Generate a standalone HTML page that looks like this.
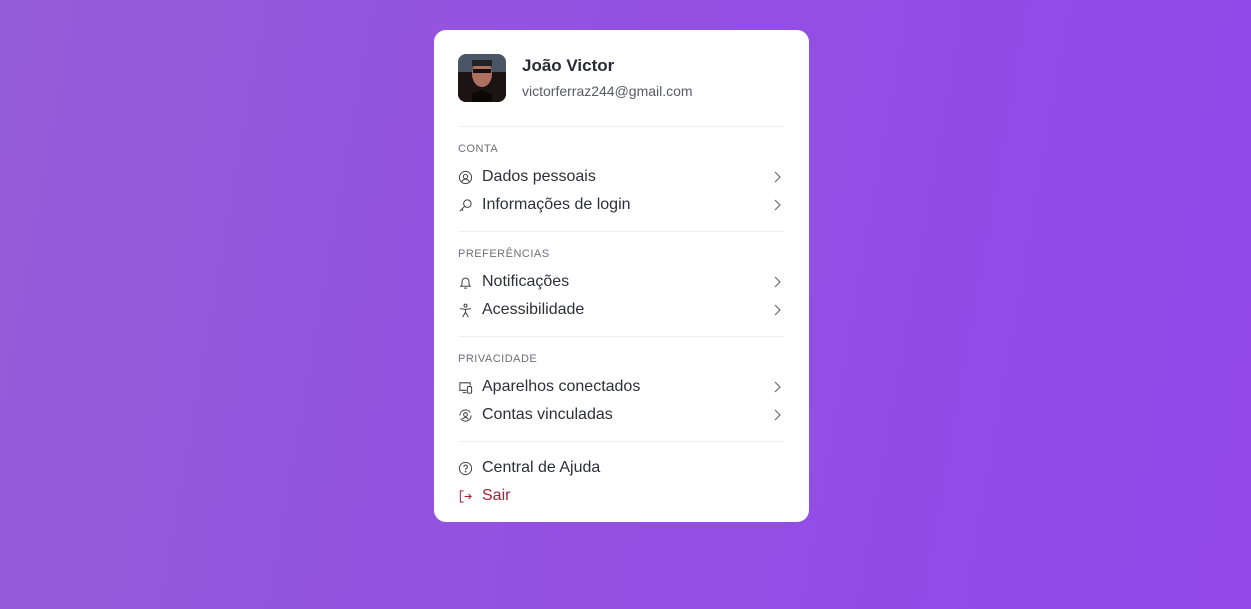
<!DOCTYPE html>
<html><head><meta charset="utf-8"><style>
*{margin:0;padding:0;box-sizing:border-box}
body{width:1251px;height:609px;overflow:hidden;background:linear-gradient(100deg,#955cd8 0%,#9350e2 50%,#9248eb 100%);font-family:"Liberation Sans",sans-serif;position:relative}
.card{position:absolute;left:434px;top:30px;width:375px;height:492px;background:#fff;border-radius:12px}
.av{position:absolute;left:24px;top:24px;width:48px;height:48px;border-radius:8px;overflow:hidden}
.name{position:absolute;left:88px;top:26px;font-size:17px;font-weight:bold;color:#2b2b35}
.mail{position:absolute;left:88px;top:53px;font-size:14px;color:#5a5a66}
.hr{position:absolute;left:24px;width:326px;height:1px;background:#f0f0f4}
.lab{position:absolute;left:24px;font-size:11px;color:#6e6e78;letter-spacing:.5px}
.row{position:absolute;left:24px;width:326px;height:24px;font-size:16px;color:#2f2f3a;display:flex;align-items:center}
.row svg.i{width:15px;height:15px;margin-right:9px;flex:none}
.row .ch{position:absolute;right:2px;top:6px;width:9px;height:12px}
</style></head><body>
<div class="card">
<div class="av"><svg width="48" height="48"><rect width="48" height="48" fill="#4a5566"/><rect y="18" width="48" height="30" fill="#1c1414"/><ellipse cx="24" cy="20" rx="10" ry="13" fill="#b07060"/><rect x="14" y="6" width="20" height="6" fill="#222"/><rect x="15" y="15" width="18" height="4" fill="#111"/><path d="M14 40 L24 36 L34 40 L34 48 L14 48Z" fill="#0c0808"/></svg></div>
<div class="name">João Victor</div>
<div class="mail">victorferraz244@gmail.com</div>
<div class="hr" style="top:96px"></div>
<div class="lab" style="top:113px">CONTA</div>
<div class="row" style="top:135px"><svg class="i" viewBox="0 0 16 16" fill="none" stroke="#444" stroke-width="1.1"><circle cx="8" cy="8" r="6.5"/><circle cx="8" cy="7" r="2.3"/><path d="M4 12.5c1-2 2.5-2.6 4-2.6s3 .6 4 2.6"/></svg>Dados pessoais<svg class="ch" viewBox="0 0 9 12" fill="none" stroke="#666" stroke-width="1.1"><path d="M2 1l5 5-5 5"/></svg></div>
<div class="row" style="top:163px"><svg class="i" viewBox="0 0 16 16" fill="none" stroke="#444" stroke-width="1.1"><circle cx="10" cy="6" r="4"/><path d="M7 9l-5 5M4 12l1.5 1.5"/></svg>Informações de login<svg class="ch" viewBox="0 0 9 12" fill="none" stroke="#666" stroke-width="1.1"><path d="M2 1l5 5-5 5"/></svg></div>
<div class="hr" style="top:201px"></div>
<div class="lab" style="top:218px">PREFERÊNCIAS</div>
<div class="row" style="top:240px"><svg class="i" viewBox="0 0 16 16" fill="none" stroke="#444" stroke-width="1.1"><path d="M3 12h10l-1.3-2V7a3.7 3.7 0 0 0-7.4 0v3z"/><path d="M6.5 14h3"/></svg>Notificações<svg class="ch" viewBox="0 0 9 12" fill="none" stroke="#666" stroke-width="1.1"><path d="M2 1l5 5-5 5"/></svg></div>
<div class="row" style="top:268px"><svg class="i" viewBox="0 0 16 16" fill="none" stroke="#444" stroke-width="1.1"><circle cx="8" cy="2.8" r="1.6"/><path d="M2 6l6 .8 6-.8M8 6.8v3L5 15M8 9.8l3 5.2"/></svg>Acessibilidade<svg class="ch" viewBox="0 0 9 12" fill="none" stroke="#666" stroke-width="1.1"><path d="M2 1l5 5-5 5"/></svg></div>
<div class="hr" style="top:306px"></div>
<div class="lab" style="top:323px">PRIVACIDADE</div>
<div class="row" style="top:345px"><svg class="i" viewBox="0 0 16 16" fill="none" stroke="#444" stroke-width="1.1"><path d="M9 11H2V3h11v3"/><path d="M5 13.5h4"/><rect x="10" y="7" width="4.5" height="7" rx="1"/></svg>Aparelhos conectados<svg class="ch" viewBox="0 0 9 12" fill="none" stroke="#666" stroke-width="1.1"><path d="M2 1l5 5-5 5"/></svg></div>
<div class="row" style="top:373px"><svg class="i" viewBox="0 0 16 16" fill="none" stroke="#444" stroke-width="1.1"><path d="M2 8a6 6 0 0 1 11-3.3M14 8a6 6 0 0 1-11 3.3"/><circle cx="8" cy="7" r="2"/><path d="M5 12c1-1.6 2-2 3-2s2 .4 3 2"/></svg>Contas vinculadas<svg class="ch" viewBox="0 0 9 12" fill="none" stroke="#666" stroke-width="1.1"><path d="M2 1l5 5-5 5"/></svg></div>
<div class="hr" style="top:411px"></div>
<div class="row" style="top:426px"><svg class="i" viewBox="0 0 16 16" fill="none" stroke="#444" stroke-width="1.1"><circle cx="8" cy="8" r="6.5"/><path d="M6.2 6.3a1.9 1.9 0 1 1 2.6 1.7c-.6.3-.8.7-.8 1.3"/><circle cx="8" cy="11.3" r=".4" fill="#444"/></svg>Central de Ajuda</div>
<div class="row" style="top:454px;color:#a3203a"><svg class="i" viewBox="0 0 16 16" fill="none" stroke="#a3203a" stroke-width="1.1"><path d="M6 2H2.5v12H6M7 8h7M11.5 5.5 14 8l-2.5 2.5"/></svg>Sair</div>
</div>
</body></html>
